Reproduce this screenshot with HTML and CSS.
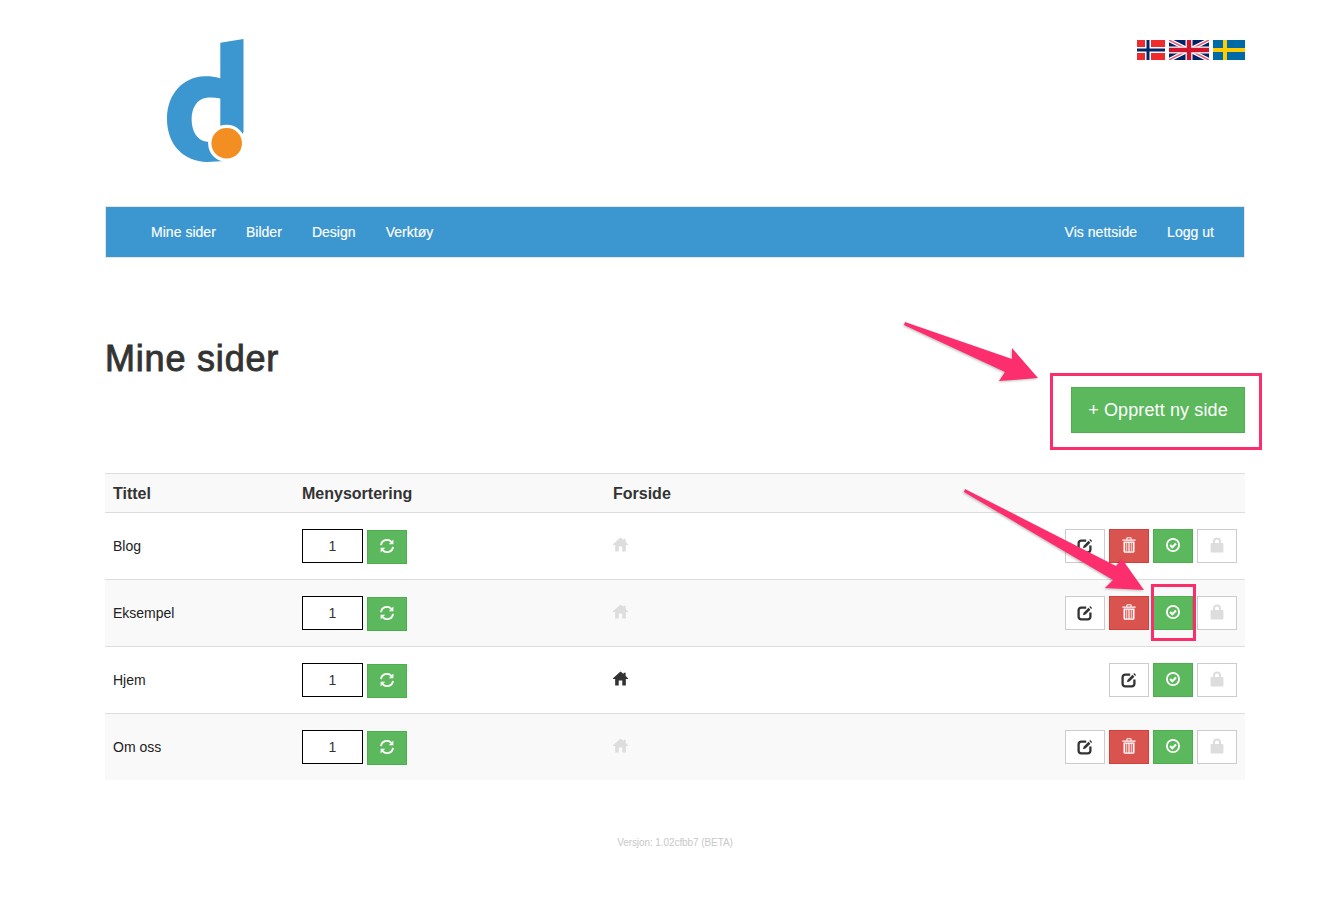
FILE: index.html
```html
<!DOCTYPE html>
<html lang="no">
<head>
<meta charset="utf-8">
<title>Mine sider</title>
<link rel="stylesheet" href="styles.css">
</head>
<body>
<svg class="defs" width="0" height="0" aria-hidden="true">
  <defs>
    <symbol id="i-edit" viewBox="0 0 16 16">
      <path d="M9.2 2.6H4.2A2.6 2.6 0 0 0 1.6 5.2v6.6a2.6 2.6 0 0 0 2.6 2.6h6.6a2.6 2.6 0 0 0 2.6-2.6V7.4" fill="none" stroke="currentColor" stroke-width="2.3"/>
      <path d="M5.9 10.3l.7-2.6 4.9-4.9 1.9 1.9-4.9 4.9z" fill="currentColor"/>
      <path d="M12.3 2l.9-.9 1.9 1.9-.9.9z" fill="currentColor"/>
    </symbol>
    <symbol id="i-trash" viewBox="0 0 14 16">
      <path fill-rule="evenodd" d="M0.4 2.4H4.4V1.2Q4.4 0.3 5.4 0.3H8.6Q9.6 0.3 9.6 1.2V2.4H13.6V3.7H0.4ZM5.4 1.2V2.4H8.6V1.2Z" fill="currentColor"/>
      <path fill-rule="evenodd" d="M1.5 4.5H12.5V14.6Q12.5 15.7 11.4 15.7H2.6Q1.5 15.7 1.5 14.6ZM3.2 5.8V14.4H4.4V5.8ZM5.2 5.8V14.4H6.4V5.8ZM7.6 5.8V14.4H8.8V5.8ZM9.6 5.8V14.4H10.8V5.8Z" fill="currentColor"/>
    </symbol>
    <symbol id="i-ok" viewBox="0 0 16 16">
      <circle cx="8" cy="8" r="6.1" fill="none" stroke="currentColor" stroke-width="1.8"/>
      <path d="M5.1 8l2.2 2.2 3.7-3.8" fill="none" stroke="currentColor" stroke-width="2.1"/>
    </symbol>
    <symbol id="i-lock" viewBox="0 0 14 16">
      <path fill-rule="evenodd" d="M3 6V4.4A4 4 0 0 1 11 4.4V6H12.5Q13.4 6 13.4 6.9V14.4Q13.4 15.4 12.5 15.4H1.5Q.6 15.4 .6 14.4V6.9Q.6 6 1.5 6ZM5 6H9V4.4A2 2 0 0 0 5 4.4Z" fill="currentColor"/>
    </symbol>
    <symbol id="i-refresh" viewBox="0 0 16 16">
      <path d="M2 7.2A6 6 0 0 1 12.4 3.9" fill="none" stroke="currentColor" stroke-width="1.9"/>
      <path d="M14.4 1.6V6.2H9.8z" fill="currentColor"/>
      <path d="M14 8.8A6 6 0 0 1 3.6 12.1" fill="none" stroke="currentColor" stroke-width="1.9"/>
      <path d="M1.6 14.4V9.8H6.2z" fill="currentColor"/>
    </symbol>
    <symbol id="i-home" viewBox="0 0 16 16">
      <path d="M8 .4L11.3 3.3V1.8H13.5V5.3L16 7.6V8.6H13.7V15.4H9.9V10.2H6.1V15.4H2.3V8.6H0V7.6Z" fill="currentColor"/>
    </symbol>
  </defs>
</svg>

<div class="page">
  <header class="top">
    <svg class="logo" viewBox="167 38 78 126" width="78" height="126" role="img" aria-label="Logo">
      <path fill="#3c96d0" fill-rule="evenodd" d="M243.5 39L220.3 42.7V78.2C214 76.6 209 76 204.5 76.3C183 77 167 94 167 119C167 145 184 161.5 207 162L225 161L243.5 132ZM220.3 98.4C215 97.4 210 97.3 206.5 97.8C197 99 191.6 108 191.6 119C191.6 131 197 140.8 207 141.7L220.3 141Z"/>
      <circle cx="226.7" cy="143.3" r="18.6" fill="#fff"/>
      <circle cx="226.7" cy="143.3" r="15.3" fill="#f28e22"/>
    </svg>
    <div class="flags">
      <svg width="28" height="20" viewBox="0 0 28 20" role="img" aria-label="Norsk">
        <rect width="28" height="20" fill="#ef2b2d"/>
        <rect x="8" width="6" height="20" fill="#fff"/><rect y="7" width="28" height="6" fill="#fff"/>
        <rect x="9.5" width="3" height="20" fill="#002868"/><rect y="8.5" width="28" height="3" fill="#002868"/>
      </svg>
      <svg width="40" height="20" viewBox="0 0 40 20" role="img" aria-label="English">
        <rect width="40" height="20" fill="#012169"/>
        <path d="M0 0L40 20M40 0L0 20" stroke="#fff" stroke-width="4"/>
        <path d="M0 0L40 20M40 0L0 20" stroke="#e4687f" stroke-width="1.6"/>
        <path d="M20 0V20M0 10H40" stroke="#fff" stroke-width="7"/>
        <path d="M20 0V20M0 10H40" stroke="#cf142b" stroke-width="4.4"/>
      </svg>
      <svg width="32" height="20" viewBox="0 0 32 20" role="img" aria-label="Svenska">
        <rect width="32" height="20" fill="#006aa7"/>
        <rect x="10" width="4" height="20" fill="#fecc00"/><rect y="8" width="32" height="4" fill="#fecc00"/>
      </svg>
    </div>
  </header>

  <nav class="nav">
    <ul class="nav-list">
      <li><a href="#">Mine sider</a></li>
      <li><a href="#">Bilder</a></li>
      <li><a href="#">Design</a></li>
      <li><a href="#">Verktøy</a></li>
    </ul>
    <ul class="nav-list">
      <li><a href="#">Vis nettside</a></li>
      <li><a href="#">Logg ut</a></li>
    </ul>
  </nav>

  <div class="title-row">
    <h1 class="title">Mine sider</h1>
    <a class="btn-new" href="#">+ Opprett ny side</a>
  </div>

  <table class="pages">
    <thead>
      <tr><th class="c-title">Tittel</th><th class="c-sort">Menysortering</th><th class="c-home">Forside</th><th></th></tr>
    </thead>
    <tbody>
      <tr>
        <td>Blog</td>
        <td><div class="sort"><input class="sort-input" value="1"><button class="btn green low"><svg class="ic"><use href="#i-refresh"/></svg></button></div></td>
        <td><svg class="home"><use href="#i-home"/></svg></td>
        <td><div class="acts">
          <button class="btn plain"><svg class="ic"><use href="#i-edit"/></svg></button>
          <button class="btn red"><svg class="ic"><use href="#i-trash"/></svg></button>
          <button class="btn green"><svg class="ic"><use href="#i-ok"/></svg></button>
          <button class="btn off"><svg class="ic"><use href="#i-lock"/></svg></button>
        </div></td>
      </tr>
      <tr>
        <td>Eksempel</td>
        <td><div class="sort"><input class="sort-input" value="1"><button class="btn green low"><svg class="ic"><use href="#i-refresh"/></svg></button></div></td>
        <td><svg class="home"><use href="#i-home"/></svg></td>
        <td><div class="acts">
          <button class="btn plain"><svg class="ic"><use href="#i-edit"/></svg></button>
          <button class="btn red"><svg class="ic"><use href="#i-trash"/></svg></button>
          <button class="btn green"><svg class="ic"><use href="#i-ok"/></svg></button>
          <button class="btn off"><svg class="ic"><use href="#i-lock"/></svg></button>
        </div></td>
      </tr>
      <tr>
        <td>Hjem</td>
        <td><div class="sort"><input class="sort-input" value="1"><button class="btn green low"><svg class="ic"><use href="#i-refresh"/></svg></button></div></td>
        <td><svg class="home active"><use href="#i-home"/></svg></td>
        <td><div class="acts">
          <button class="btn plain"><svg class="ic"><use href="#i-edit"/></svg></button>
          <button class="btn green"><svg class="ic"><use href="#i-ok"/></svg></button>
          <button class="btn off"><svg class="ic"><use href="#i-lock"/></svg></button>
        </div></td>
      </tr>
      <tr>
        <td>Om oss</td>
        <td><div class="sort"><input class="sort-input" value="1"><button class="btn green low"><svg class="ic"><use href="#i-refresh"/></svg></button></div></td>
        <td><svg class="home"><use href="#i-home"/></svg></td>
        <td><div class="acts">
          <button class="btn plain"><svg class="ic"><use href="#i-edit"/></svg></button>
          <button class="btn red"><svg class="ic"><use href="#i-trash"/></svg></button>
          <button class="btn green"><svg class="ic"><use href="#i-ok"/></svg></button>
          <button class="btn off"><svg class="ic"><use href="#i-lock"/></svg></button>
        </div></td>
      </tr>
    </tbody>
  </table>

  <footer class="foot">Versjon: 1.02cfbb7 (BETA)</footer>
</div>

<svg class="marks" viewBox="0 0 1335 904" width="1335" height="904" aria-hidden="true">
  <rect class="mark-box" x="1051.5" y="374.5" width="209" height="74"/>
  <rect class="mark-box" x="1152.5" y="585.5" width="42" height="54"/>
  <path class="mark-arrow" d="M905 322L1012 359L1012 348L1038 378L999 381L1005 372L904 325Z"/>
  <path class="mark-arrow" d="M965 489L1116 566L1122 559L1144 590L1105 588L1113 580L964 492Z"/>
</svg>
</body>
</html>
```
FILE: styles.css
```css
* { box-sizing: border-box; }
html, body { margin: 0; padding: 0; background: #fff; }
body {
  width: 1335px;
  height: 904px;
  position: relative;
  overflow: hidden;
  font-family: "Liberation Sans", Arial, sans-serif;
  font-size: 14px;
  line-height: 20px;
  color: #333;
}
.defs { position: absolute; }
.page { width: 1140px; margin-left: 105px; }

.top {
  height: 206px;
  padding: 38px 0 0 62px;
  display: flex;
  justify-content: space-between;
  align-items: flex-start;
}
.logo { display: block; }
.flags { display: flex; gap: 4px; padding-top: 2px; }
.flags svg { display: block; }

.nav {
  height: 52px;
  background: #3c96d0;
  border: 1px solid #e7e7e7;
  display: flex;
  justify-content: space-between;
  padding: 0 15px 0 30px;
}
.nav-list { display: flex; list-style: none; margin: 0; padding: 0; }
.nav-list a {
  display: block;
  padding: 15px;
  color: #fff;
  text-decoration: none;
  letter-spacing: 0.03px;
  -webkit-text-stroke: 0.15px #fff;
}

.title-row { display: flex; justify-content: space-between; align-items: flex-start; padding-top: 81px; height: 215px; }
.title {
  margin: 0;
  font-size: 36px;
  line-height: 40px;
  font-weight: 400;
  color: #333;
  letter-spacing: 0.8px;
  -webkit-text-stroke: 0.9px #333;
}
.btn-new {
  margin-top: 48px;
  width: 174px;
  height: 46px;
  background: #5cb85c;
  border: 1px solid #4cae4c;
  color: #fff;
  font-size: 18px;
  line-height: 44px;
  letter-spacing: 0.12px;
  text-align: center;
  text-decoration: none;
  white-space: nowrap;
}

.pages { width: 1140px; border-collapse: separate; border-spacing: 0; table-layout: fixed; }
.pages th {
  height: 39px;
  padding: 2px 8px 0;
  text-align: left;
  font-size: 16px;
  font-weight: 700;
  background: #f9f9f9;
  border-top: 1px solid #ddd;
}
.c-title { width: 189px; }
.c-sort { width: 311px; }
.c-home { width: 360px; }
.pages td {
  height: 67px;
  padding: 16px 8px 15px;
  border-top: 1px solid #ddd;
  color: #222;
  line-height: 34px;
  vertical-align: top;
}
.pages tbody tr:nth-child(even) td { background: #f9f9f9; }

.sort { display: flex; gap: 4px; align-items: flex-start; }
.sort-input {
  width: 61px;
  height: 34px;
  border: 1px solid #000;
  border-radius: 0;
  padding: 0;
  margin: 0;
  text-align: center;
  font: 14px "Liberation Sans", Arial, sans-serif;
  color: #333;
  background: #fff;
  outline: 0;
}
.acts { display: flex; justify-content: flex-end; gap: 4px; }
.btn {
  width: 40px;
  height: 34px;
  padding: 0 0 2px;
  margin: 0;
  border: 1px solid;
  border-radius: 0;
  display: flex;
  align-items: center;
  justify-content: center;
}
.low { margin-top: 1px; padding-bottom: 3px; }
.ic { width: 16px; height: 16px; display: block; }
.green { background: #5cb85c; border-color: #4cae4c; color: #fff; }
.red { background: #d9534f; border-color: #d43f3a; color: #fff; }
.plain { background: #fff; border-color: #ccc; color: #333; padding-bottom: 0; }
.off { background: #fff; border-color: #ccc; color: #ddd; padding-right: 1px; }
.home { width: 15px; height: 15px; display: block; margin-top: 8px; color: #ddd; }
.home.active { color: #333; }

.foot {
  margin-top: 53px;
  text-align: center;
  font-size: 10px;
  line-height: 20px;
  letter-spacing: -0.08px;
  color: #c8c8c8;
}

.marks { position: absolute; left: 0; top: 0; pointer-events: none; }
.mark-box { fill: none; stroke: #fb2e6c; stroke-width: 3; }
.mark-arrow { fill: #fc2e6e; filter: drop-shadow(-1px 1px 1px rgba(0,0,0,.25)); }
```
